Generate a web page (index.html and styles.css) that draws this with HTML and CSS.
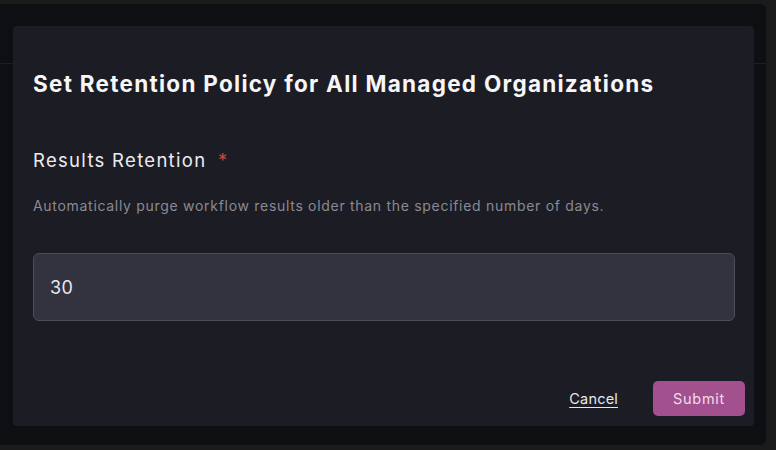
FILE: index.html
```html
<!DOCTYPE html>
<html>
<head>
<meta charset="utf-8">
<link rel="stylesheet" href="styles.css">
</head>
<body>
<div class="page">
  <div class="panel">
    <div class="panel-header"></div>
    <div class="modal">
      <h2 class="modal-title">Set Retention Policy for All Managed Organizations</h2>
      <div class="field">
        <div class="field-label">Results Retention <span class="req">*</span></div>
        <div class="field-help">Automatically purge workflow results older than the specified number of days.</div>
        <div class="input">30</div>
      </div>
      <div class="footer">
        <a class="cancel">Cancel</a>
        <button class="submit">Submit</button>
      </div>
    </div>
  </div>
</div>
</body>
</html>
```
FILE: styles.css
```css
html, body {
  margin: 0;
  padding: 0;
  background: #1b1b1b;
  width: 776px;
  height: 450px;
  overflow: hidden;
  font-family: Inter, "Open Sans", sans-serif;
}
.page {
  padding: 4px 10px 5px 0;
  height: 441px;
}
.panel {
  position: relative;
  height: 441px;
  background: #0e0f12;
  border-radius: 0 6px 6px 0;
}
.panel-header {
  height: 59px;
  border-bottom: 1px solid #1d1e22;
}
.modal {
  position: absolute;
  left: 13px;
  top: 22px;
  width: 741px;
  height: 400px;
  box-sizing: border-box;
  background: #1c1c24;
  border-radius: 4px;
  padding: 44px 9px 10px 20px;
  display: flex;
  flex-direction: column;
}
.modal-title {
  margin: 0;
  font-family: Inter, sans-serif;
  font-size: 22.5px;
  line-height: 28px;
  font-weight: 700;
  color: #f6f6f8;
  letter-spacing: 1.27px;
}
.field {
  margin-top: 50px;
  padding-right: 10px;
  display: flex;
  flex-direction: column;
}
.field-label {
  font-size: 18.5px;
  line-height: 24px;
  color: #ececf0;
  letter-spacing: 1.3px;
}
.req {
  color: #c9463d;
  margin-left: 5px;
}
.field-help {
  margin-top: 24px;
  font-size: 14px;
  line-height: 20px;
  color: #8a8a93;
  letter-spacing: 0.7px;
}
.input {
  margin-top: 37px;
  height: 68px;
  box-sizing: border-box;
  background: #33333f;
  border: 1px solid #4c4c59;
  border-radius: 6px;
  padding: 0 16px;
  display: flex;
  align-items: center;
  font-size: 18px;
  color: #e8e8ec;
  letter-spacing: 0.5px;
}
.footer {
  margin-top: auto;
  display: flex;
  justify-content: flex-end;
  align-items: center;
  gap: 35px;
}
.cancel {
  font-size: 14.5px;
  color: #e6e6ea;
  text-decoration: underline;
  text-underline-offset: 3px;
  letter-spacing: 0.2px;
}
.submit {
  width: 92px;
  height: 35px;
  border: none;
  border-radius: 5px;
  background: #a3508f;
  color: #f0dcea;
  font-family: Inter, sans-serif;
  font-size: 14.5px;
  letter-spacing: 0.7px;
}
```
